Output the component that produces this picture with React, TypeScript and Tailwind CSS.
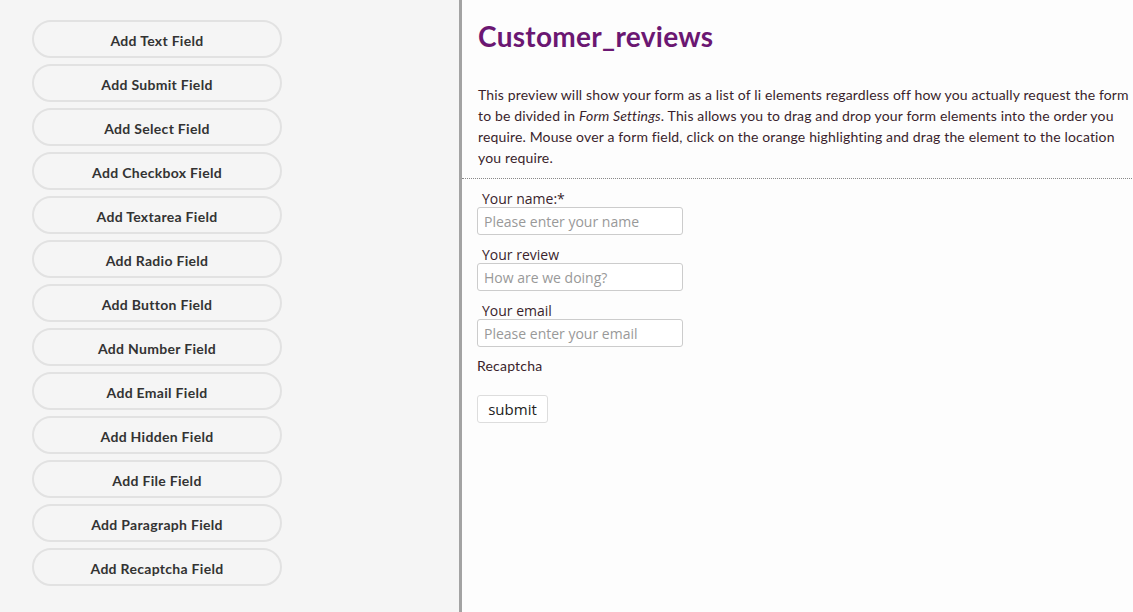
const fields = [
  'Text',
  'Submit',
  'Select',
  'Checkbox',
  'Textarea',
  'Radio',
  'Button',
  'Number',
  'Email',
  'Hidden',
  'File',
  'Paragraph',
  'Recaptcha',
];

const inputs = [
  { label: 'Your name:*', placeholder: 'Please enter your name' },
  { label: 'Your review', placeholder: 'How are we doing?' },
  { label: 'Your email', placeholder: 'Please enter your email' },
];

export default function App() {
  return (
    <div className="flex h-[612px] w-full overflow-hidden font-['Lato',sans-serif]">
      <aside className="flex w-[459px] shrink-0 flex-col gap-[6px] bg-[#f5f5f5] pl-8 pt-5">
        {fields.map((f) => (
          <button
            key={f}
            className="h-[38px] w-[250px] rounded-full border-2 border-[#e2e2e2] bg-[#f5f5f5] pt-[2px] text-[14px] font-bold tracking-[0.3px] text-[#333]"
          >
            Add {f} Field
          </button>
        ))}
      </aside>
      <div className="w-[3px] shrink-0 bg-[#a3a3a3]" />
      <main className="flex-1 bg-[#fdfdfd]">
        <div className="pl-4 pr-[5px] pt-[18px]">
          <h1 className="text-[28px] font-bold leading-[36px] tracking-[0.3px] text-[#6b1772]">Customer_reviews</h1>
          <p className="mt-[30px] whitespace-nowrap pb-[10px] text-[14px] leading-[21px] tracking-[0.15px] text-[#3a1f2c]">
            This preview will show your form as a list of li elements regardless off how you actually request the form
            <br />
            to be divided in <em>Form Settings</em>. This allows you to drag and drop your form elements into the order
            you
            <br />
            require. Mouse over a form field, click on the orange highlighting and drag the element to the location
            <br />
            you require.
          </p>
        </div>
        <div className="border-t border-dotted border-[#888]" />
        <form className="flex flex-col px-[15px] pt-[11px] font-['Open_Sans',sans-serif] text-[14px] text-[#3a1f2c]">
          {inputs.map((i) => (
            <div key={i.label} className="mb-[11px] flex flex-col">
              <label className="pl-[5px] leading-[17px]">{i.label}</label>
              <input
                placeholder={i.placeholder}
                className="h-[28px] w-[206px] rounded-[3px] border border-[#ccc] bg-white px-[6px] text-[14px] placeholder:text-[#999]"
              />
            </div>
          ))}
          <div className="mt-[-2px] font-['Lato',sans-serif] leading-[20px] tracking-[0.2px]">Recaptcha</div>
          <div className="mt-[19px]">
            <button
              type="button"
              className="h-[28px] w-[71px] rounded-[3px] border border-[#ddd] bg-white text-[15px] text-[#222]"
            >
              submit
            </button>
          </div>
        </form>
      </main>
    </div>
  );
}
